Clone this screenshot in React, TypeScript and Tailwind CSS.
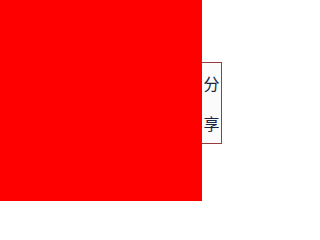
import React from "react";

export default function App() {
  return (
    <div className="flex items-start bg-white w-[249px] h-[218px]">
      <div className="w-[202px] h-[201px] bg-[#ff0000] shrink-0" />
      <div className="mt-[62px] w-[20px] border-y border-r border-[#9a3b3b] bg-[#fbfbfb] text-center text-[16px] leading-[40px] text-[#1c2540] font-['Noto_Sans_CJK_SC',sans-serif]">
        <div>分</div>
        <div>享</div>
      </div>
    </div>
  );
}
